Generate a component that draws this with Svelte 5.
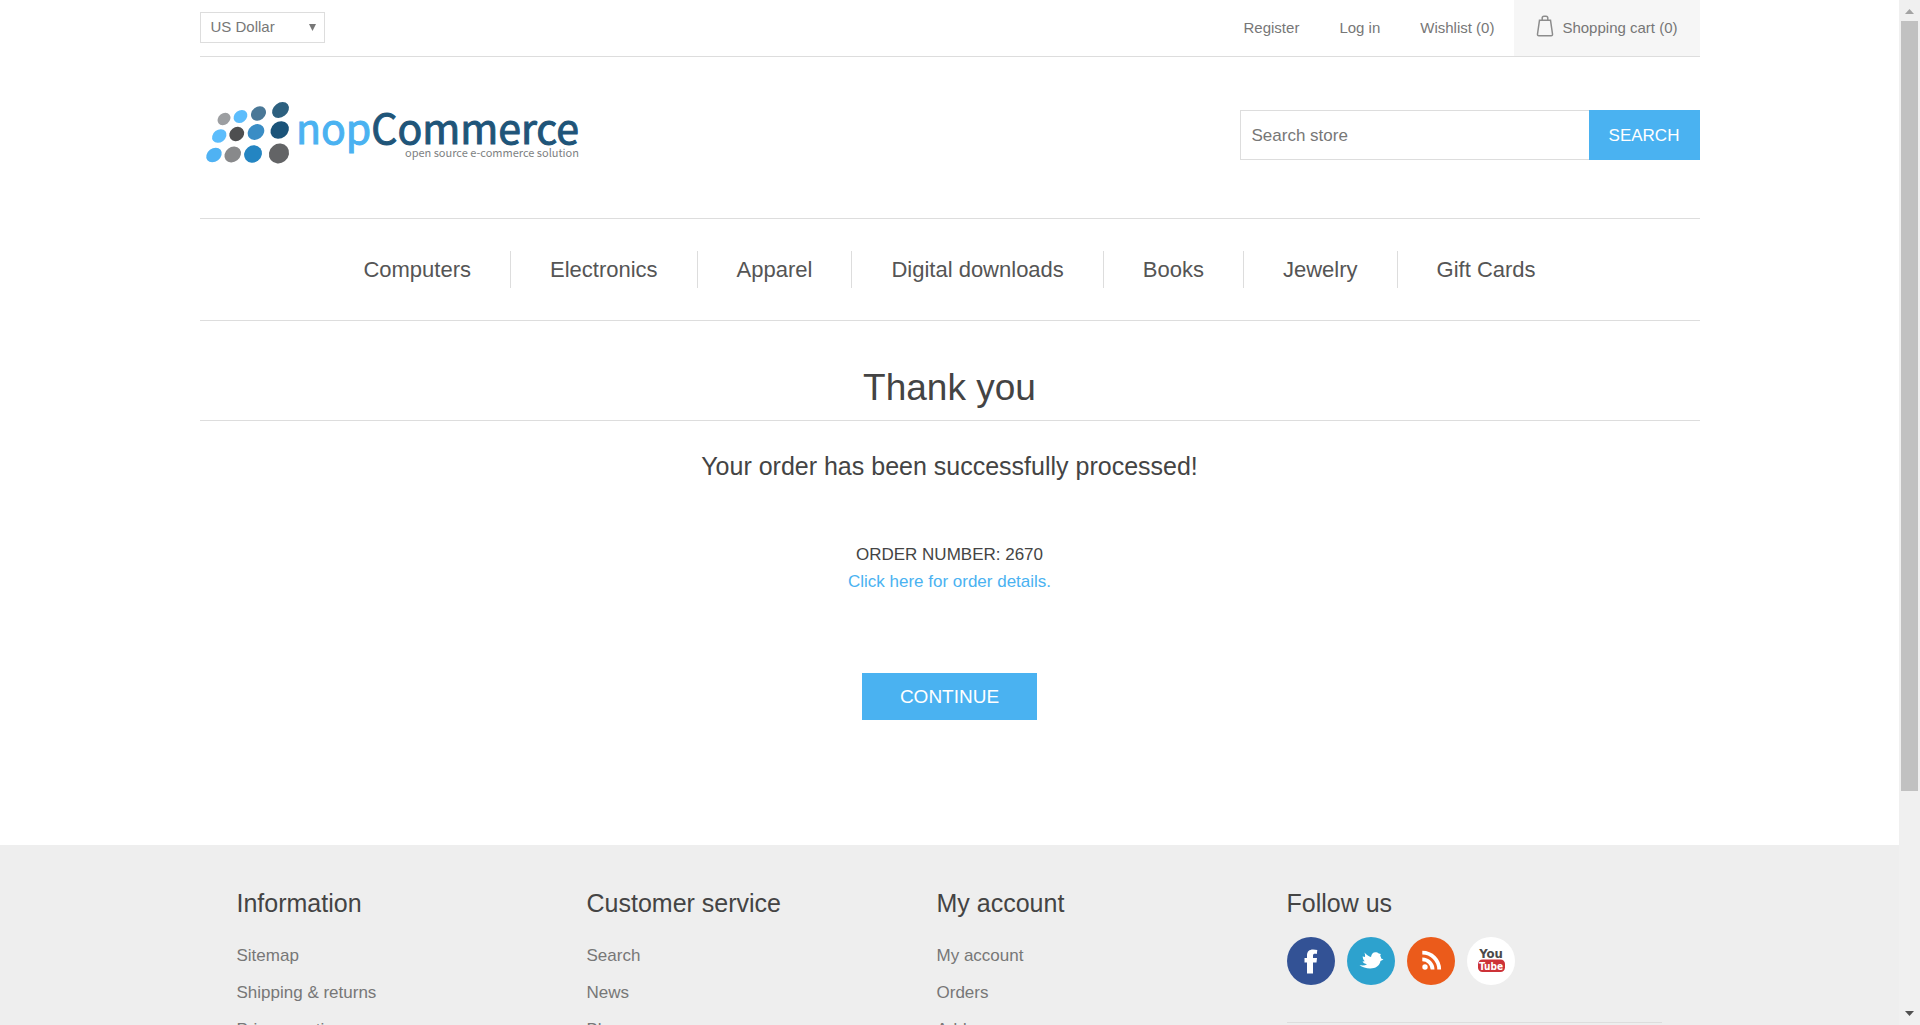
<script>
  const account = ['Register', 'Log in', 'Wishlist (0)'];
  const categories = ['Computers', 'Electronics', 'Apparel', 'Digital downloads', 'Books', 'Jewelry', 'Gift Cards'];
  const columns = [
    { title: 'Information', links: ['Sitemap', 'Shipping & returns', 'Privacy notice'] },
    { title: 'Customer service', links: ['Search', 'News', 'Blog'] },
    { title: 'My account', links: ['My account', 'Orders', 'Addresses'] }
  ];
  // Logo dots: centre x, centre y, long radius, short radius, fill
  const dots = [
    [24, 29, 7, 5.6, '#9c9ea1'], [40.5, 26.5, 7.4, 6, '#5cbdfc'], [58.5, 23.5, 8, 6.6, '#4a7897'], [80.5, 20, 9.2, 7, '#2d607f'],
    [19.3, 46, 7.8, 6.2, '#5cbdfc'], [36.7, 44, 7.8, 6.8, '#4e4f50'], [56, 42, 8.8, 7.4, '#3a8dc5'], [79.7, 40, 9.8, 8.2, '#1b5379'],
    [14, 65, 8.4, 6.6, '#4fb2f3'], [32.7, 64.5, 8.8, 7.4, '#88898b'], [53, 64, 9.2, 8.4, '#2485c2'], [79, 63.5, 10.4, 9.6, '#636466']
  ];
</script>

<div class="window">
  <div class="page">
    <header class="wrap">
      <div class="topbar">
        <div class="currency">
          <select aria-label="Currency"><option>US Dollar</option><option>Euro</option></select>
          <svg width="7" height="7" viewBox="0 0 7 7" aria-hidden="true"><path d="M0 0h7L3.500 7z" fill="#777" /></svg>
        </div>
        <nav class="account" aria-label="Account">
          {#each account as label}<a href="#top">{label}</a>{/each}
          <a class="cart" href="#cart">
            <svg width="18" height="22" viewBox="0 0 18 22" fill="none" stroke="#8c8c8c" stroke-width="1.500" aria-hidden="true">
              <path d="M3.500 5.200h11l2 13.800q.2 1.800-1.400 1.800H2.900q-1.600 0-1.400-1.800z" /><path d="M6.200 5V3q0-1.800 1.800-1.800h2q1.800 0 1.800 1.800v2" />
            </svg>
            Shopping cart (0)
          </a>
        </nav>
      </div>

      <div class="brandbar">
        <a class="logo" href="#home" aria-label="nopCommerce">
          <svg width="390" height="90" viewBox="0 0 390 90">
            {#each dots as [x, y, rx, ry, fill]}
              <ellipse cx={x} cy={y} {rx} {ry} {fill} transform="rotate(-38 {x} {y})" />
            {/each}
            <text class="word light" x="96" y="54">nop</text>
            <text class="word dark" x="379" y="54" text-anchor="end">Commerce</text>
            <text class="tag" x="379" y="67" text-anchor="end">open source e-commerce solution</text>
          </svg>
        </a>
        <form class="search">
          <input type="text" placeholder="Search store" aria-label="Search store" />
          <button type="button">SEARCH</button>
        </form>
      </div>

      <nav class="menu" aria-label="Categories">
        {#each categories as label}<a href="#top">{label}</a>{/each}
      </nav>
    </header>

    <main class="wrap">
      <h1>Thank you</h1>
      <h2>Your order has been successfully processed!</h2>
      <p>ORDER NUMBER: 2670</p>
      <p><a href="#order">Click here for order details.</a></p>
      <button class="continue" type="button">CONTINUE</button>
    </main>

    <footer>
      <div class="wrap columns">
        {#each columns as column}
          <section>
            <h3>{column.title}</h3>
            <ul>
              {#each column.links as link}<li><a href="#top">{link}</a></li>{/each}
            </ul>
          </section>
        {/each}
        <section>
          <h3>Follow us</h3>
          <div class="social">
            <a href="#facebook" aria-label="Facebook">
              <svg viewBox="0 0 48 48"><circle cx="24" cy="24" r="24" fill="#335295" /><path fill="#fff" d="M20 36.500V25.500h-2.500v-4.500H20v-2.500c0-4 2.200-6 6-6 1.700 0 3 .2 4.300.5l-.5 4c-2.600-.5-3.800-.2-3.800 1.800v2.200h4l-.5 4.500H26v11z" /></svg>
            </a>
            <a href="#twitter" aria-label="Twitter">
              <svg viewBox="0 0 48 48"><circle cx="24" cy="24" r="24" fill="#2da2ce" /><path fill="#fff" d="M36.500 22.500l-3 1.500c-.8 4.800-5 7.500-10.200 7.500-4.200 0-8.300-1.200-10.800-3.500 3 .8 5.500.6 7.500-.8-2.200-.3-3.800-1.200-4.500-2.700l2.200-.2c-1.200-1-2-3-2-5 2.500 1.500 3 1 1.800-3.800 2.200 2.500 4.500 4 6.500 4.500.5-3 2-4.700 4.300-4.800 1.500 0 2.700.5 3.500 1.400l2 .4-.6 1.800c.5.900.9 1.800 1 2.700z" /></svg>
            </a>
            <a href="#rss" aria-label="RSS">
              <svg viewBox="0 0 48 48"><circle cx="24" cy="24" r="24" fill="#eb5b1b" /><circle cx="18" cy="30" r="2.700" fill="#fff" /><path fill="none" stroke="#fff" stroke-width="3.800" d="M15.300 22.300A10.300 10.300 0 0 1 25.600 32.600M15.300 15.700A16.900 16.900 0 0 1 32.200 32.600" /></svg>
            </a>
            <a href="#youtube" aria-label="YouTube">
              <svg viewBox="0 0 48 48"><circle cx="24" cy="24" r="24" fill="#fff" /><rect x="11" y="22.500" width="27" height="12.500" rx="4.500" fill="#cd3238" /><text class="tube" x="24" y="21" fill="#4a4a4a" text-anchor="middle">You</text><text class="tube small" x="24" y="33" fill="#fff" text-anchor="middle">Tube</text></svg>
            </a>
          </div>
          <div class="newsletter"></div>
        </section>
      </div>
    </footer>
  </div>

  <div class="scrollbar" aria-hidden="true">
    <svg width="9" height="5" viewBox="0 0 9 5"><path d="M0 5L4.500 0 9 5z" fill="#a3a3a3" /></svg>
    <div class="track"><div class="thumb"></div></div>
    <svg width="9" height="5" viewBox="0 0 9 5"><path d="M0 0L4.500 5 9 0z" fill="#505050" /></svg>
  </div>
</div>

<style>
  :global(body) { background: #fff; }
  .window { display: flex; height: 100vh; overflow: hidden; font: 17px/27px "Liberation Sans", Arial, sans-serif; color: #777; }
  .window * { box-sizing: border-box; }
  .page { flex: 1; min-width: 0; display: flex; flex-direction: column; }
  .wrap { width: 100%; max-width: 1500px; margin: 0 auto; }
  a { color: inherit; text-decoration: none; }
  button, input, select { font: inherit; border-radius: 0; margin: 0; }
  h1, h2, h3, p, ul { margin: 0; padding: 0; font-weight: 400; }

  .topbar { display: flex; justify-content: space-between; align-items: center; height: 57px; border-bottom: 1px solid #ddd; font-size: 15px; }
  .currency { display: grid; align-items: center; width: 125px; margin-bottom: 2px; }
  .currency > * { grid-area: 1 / 1; }
  .currency select { appearance: none; width: 100%; height: 31px; padding: 0 10px; border: 1px solid #ddd; background: #fff; color: #777; line-height: 20px; }
  .currency svg { justify-self: end; margin-right: 9px; pointer-events: none; }
  .account { display: flex; align-items: center; gap: 40px; height: 100%; }
  .account a { padding-bottom: 2px; }
  .account .cart { display: flex; align-items: center; gap: 8px; height: 100%; margin-left: -20px; padding: 0 22px 2px; background: #f6f6f6; }
  .cart svg { margin-bottom: 2px; }

  .brandbar { display: flex; justify-content: space-between; align-items: center; padding: 33px 0 38px; }
  .logo svg { display: block; }
  .word { font: 41px "Noto Sans CJK JP", "Noto Sans", sans-serif; stroke-width: 1px; }
  .light { fill: #4ab2f1; stroke: #4ab2f1; }
  .dark { fill: #1f5579; stroke: #1f5579; }
  .tag { font: 11px "Noto Sans CJK JP", "Noto Sans", sans-serif; fill: #7d7f82; }
  .search { display: flex; width: 460px; height: 50px; }
  .search input { flex: 1; min-width: 0; padding: 0 11px; border: 1px solid #ddd; border-right: 0; background: #fff; color: #777; outline: 0; }
  .search input::placeholder { color: #777; opacity: 1; }
  .search button { width: 111px; padding: 0; border: 0; background: #4ab2f1; color: #fff; }

  .menu { display: flex; justify-content: center; padding: 32px 0; border: solid #ddd; border-width: 1px 0; font-size: 22px; color: #555; }
  .menu a { padding: 0 39px; line-height: 37px; border-right: 1px solid #ddd; }
  .menu a:last-child { border-right: 0; }

  main { display: flex; flex-direction: column; align-items: center; text-align: center; color: #444; padding-bottom: 125px; }
  h1 { width: 100%; padding: 41px 0 6px; border-bottom: 1px solid #ddd; font-size: 37px; line-height: 52px; }
  h2 { padding: 29px 0 59px; font-size: 25px; line-height: 32px; }
  main p a { color: #4ab2f1; }
  .continue { width: 175px; height: 47px; margin-top: 78px; padding: 0; border: 0; background: #4ab2f1; color: #fff; font-size: 19px; }

  footer { flex: 1; background: #eee; }
  .columns { display: grid; grid-template-columns: repeat(3, 350px) 1fr; padding: 42px 38px 0 37px; }
  h3 { color: #444; font-size: 25px; line-height: 32px; }
  ul { list-style: none; padding-top: 18px; }
  li { line-height: 37px; }
  .social { display: flex; gap: 12px; padding-top: 18px; }
  .social svg { display: block; width: 48px; height: 48px; }
  .tube { font: bold 13px "Liberation Sans Narrow", "DejaVu Sans Condensed", sans-serif; }
  .small { font-size: 10px; }
  .newsletter { margin-top: 37px; border-top: 1px solid #ddd; }

  .scrollbar { display: flex; flex-direction: column; align-items: center; width: 21px; padding: 9px 0; background: #f0f0f0; }
  .track { flex: 1; width: 17px; padding: 7px 0 3px; }
  .thumb { height: 78%; background: #c1c1c1; }
</style>
